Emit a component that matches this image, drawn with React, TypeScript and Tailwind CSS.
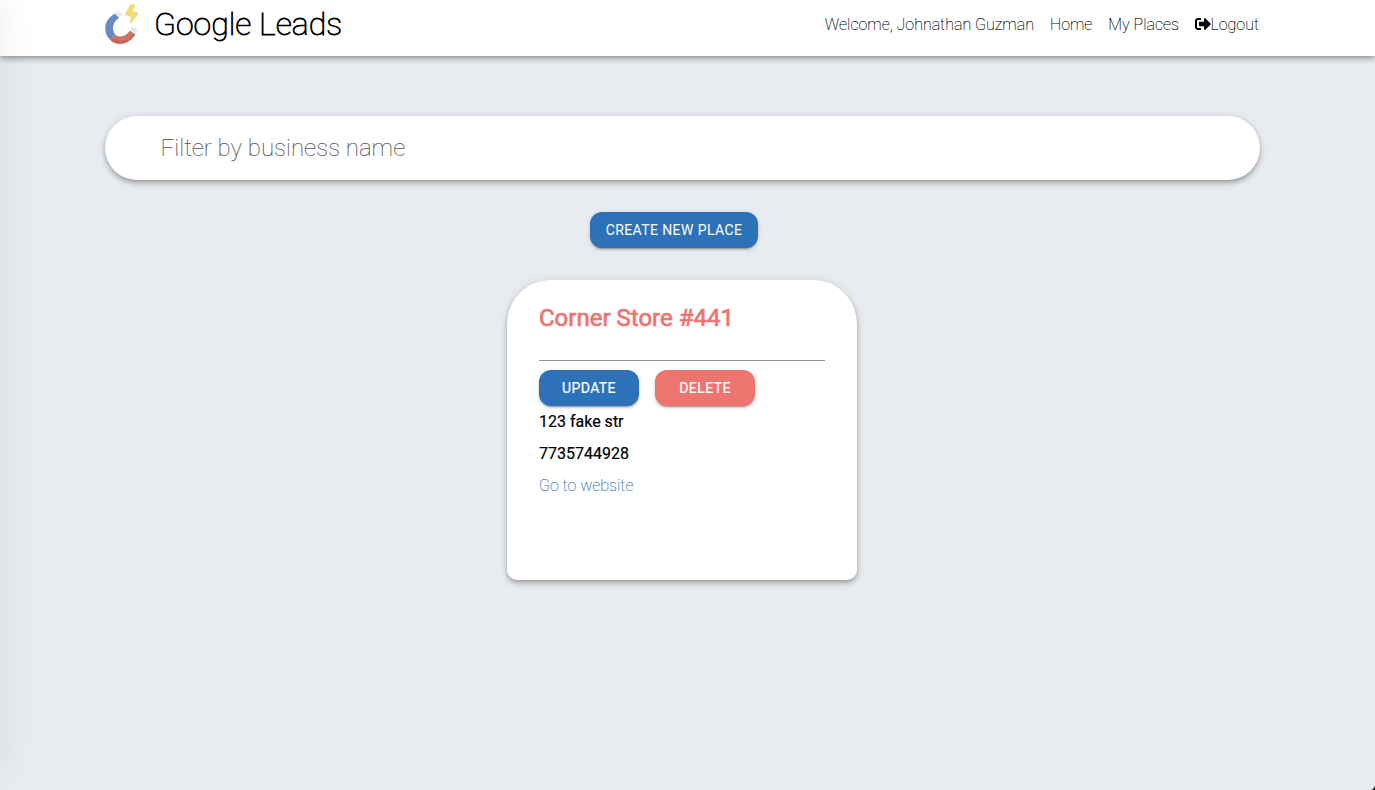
import React from "react";

function MagnetLogo() {
  return (
    <svg width="34" height="41" viewBox="0 0 34 41" className="block shrink-0">
      <path d="M9.8 9.4 C4 13.2 0.2 17.6 0.2 24 C0.2 29 1.8 32.6 5 35.6 L10.2 30.4 C7.6 27 7.4 23.4 8.6 20.4 C9.6 17.8 11.6 15.6 14.2 13.8 Z" fill="#6988c6" />
      <path d="M5 35.6 C9 40.2 15.5 41 21.5 38.4 C25.5 36.6 28.4 33.8 30.2 30.3 L25 26.7 C21 32 14.6 34.4 10.2 30.4 Z" fill="#c97565" />
      <path d="M5 35.6 C9 40.2 15.5 41 21.5 38.4 C25.5 36.6 28.4 33.8 30.2 30.3 L29 29.5 C23 37.4 13.4 38.6 6.6 34 Z" fill="#c9635b" />
      <path d="M9.8 9.4 L13.5 6.3 L18 10.6 L14.2 13.8 Z" fill="#e9e9ef" />
      <path d="M25 26.7 L27.2 22.8 L33 25.8 L30.2 30.3 Z" fill="#e9e6ea" />
      <path d="M25.2 0.4 L20.2 9.6 Q19.8 11.4 21.3 11.6 L25.8 12.4 L25 18.2 Q25.4 20 27 18.7 L33 10 Q33.5 8.4 31.8 8.1 L27.9 7.4 L30.2 2.2 Q30.2 0.7 28 0.3 Q26 -0.3 25.2 0.4 Z" fill="#f1dc70" />
    </svg>
  );
}

function LogoutIcon() {
  return (
    <svg width="16" height="16" viewBox="0 0 512 512" fill="currentColor" className="-mt-0.5 block">
      <path d="M497 273L329 441c-15 15-41 4.5-41-17v-96H152c-13.3 0-24-10.7-24-24v-96c0-13.3 10.7-24 24-24h136V88c0-21.4 25.9-32 41-17l168 168c9.3 9.4 9.3 24.6 0 34zM192 436v-40c0-6.6-5.4-12-12-12H96c-17.7 0-32-14.3-32-32V160c0-17.7 14.3-32 32-32h84c6.6 0 12-5.4 12-12V76c0-6.6-5.4-12-12-12H96c-53 0-96 43-96 96v192c0 53 43 96 96 96h84c6.6 0 12-5.4 12-12z" />
    </svg>
  );
}

const raised =
  "shadow-[0_2px_4px_-1px_rgba(0,0,0,0.2),0_4px_5px_0_rgba(0,0,0,0.14),0_1px_10px_0_rgba(0,0,0,0.12)]";
const button =
  "h-9 rounded-xl text-sm leading-9 font-normal tracking-[0.4px] text-white uppercase text-center shadow-[0_3px_1px_-2px_rgba(0,0,0,0.2),0_2px_2px_0_rgba(0,0,0,0.14),0_1px_5px_0_rgba(0,0,0,0.12)]";

export default function App() {
  return (
    <div className="relative h-[790px] overflow-hidden bg-[#e8ecf1] font-[Roboto,sans-serif] font-light text-black">
      <header className={`h-14 bg-white ${raised}`}>
        <div className="ml-[105px] flex h-12 w-[1154px] items-center justify-between">
          <div className="flex items-center gap-[15px]">
            <MagnetLogo />
            <h1 className="text-[32px] leading-12 font-thin whitespace-nowrap [-webkit-text-stroke:0.8px_black]">
              Google Leads
            </h1>
          </div>
          <nav className="flex items-center gap-4 pt-0.5 text-base leading-6 font-thin whitespace-nowrap [-webkit-text-stroke:0.15px_black]">
            <span>Welcome, Johnathan Guzman</span>
            <a>Home</a>
            <a>My Places</a>
            <a className="-ml-[0.5px] flex items-center">
              <LogoutIcon />
              Logout
            </a>
          </nav>
        </div>
      </header>

      <main className="ml-[105px] flex w-[1155px] flex-col items-center pt-[60px]">
        <input
          placeholder="Filter by business name"
          className={`h-16 w-full rounded-[32px] bg-white pr-14 pl-[55.5px] text-2xl font-thin outline-none placeholder:text-[#555] placeholder:opacity-100 [-webkit-text-stroke:0.15px_#555] ${raised}`}
        />
        <button className={`mt-8 mr-[17px] w-[168px] bg-[#2d72b8] ${button}`}>Create new place</button>
        <section className={`mt-8 mr-px h-[300px] w-[350px] rounded-t-[44px] rounded-b-[10px] bg-white px-8 pt-5 ${raised}`}>
          <h2 className="text-2xl leading-9 font-normal text-[#ee7470] [-webkit-text-stroke:0.7px_#ee7470]">
            Corner Store #441
          </h2>
          <hr className="mt-6 mb-[9px] border-t border-[#949494]" />
          <div className="flex gap-4">
            <button className={`w-[100px] bg-[#2d72b8] [-webkit-text-stroke:0.2px_white] ${button}`}>Update</button>
            <button className={`w-[100px] bg-[#ee7470] [-webkit-text-stroke:0.2px_white] ${button}`}>Delete</button>
          </div>
          <p className="text-base leading-8 font-normal [-webkit-text-stroke:0.2px_black]">123 fake str</p>
          <p className="text-base leading-8 font-normal [-webkit-text-stroke:0.2px_black]">7735744928</p>
          <a className="block text-base leading-8 font-thin text-[#2d72b8] [-webkit-text-stroke:0.15px_#2d72b8]">
            Go to website
          </a>
        </section>
      </main>

      <aside className="pointer-events-none absolute top-0 bottom-8 -left-60 w-60 shadow-[0_6px_30px_5px_rgba(60,70,40,0.08)]" />
      <svg width="5" height="5" viewBox="0 0 5 5" className="absolute right-0 bottom-0">
        <path d="M5 1 L5 5 L1 5 Q4 4 5 1 Z" fill="#111" />
      </svg>
    </div>
  );
}
